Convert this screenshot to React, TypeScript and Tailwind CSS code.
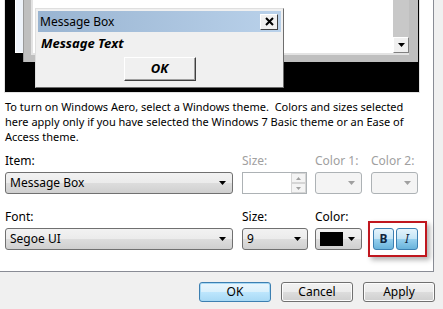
import React from 'react'

function Arrow({ color = '#000' }: { color?: string }) {
  return (
    <svg width="7" height="4" viewBox="0 0 7 4">
      <path d="M0 0h7L3.5 4z" fill={color} />
    </svg>
  )
}

function Combo({ text, width, swatch }: { text?: string; width: string; swatch?: boolean }) {
  return (
    <div
      className={`${width} h-[22px] flex items-center justify-between pl-1 pr-[6px] rounded-[3px] border border-[#707070] bg-[linear-gradient(#f2f2f2_0%,#ebebeb_50%,#dddddd_50%,#cfcfcf_100%)]`}
    >
      {swatch ? <div className="w-[23px] h-[14px] bg-black" /> : <span className="leading-none">{text}</span>}
      <Arrow />
    </div>
  )
}

function DisabledCombo() {
  return (
    <div className="w-[47px] h-[22px] flex items-center justify-end pr-[6px] rounded-[3px] border border-[#adb2b5] bg-[#f4f4f4]">
      <Arrow color="#a0a0a0" />
    </div>
  )
}

function DialogButton({ label, primary }: { label: string; primary?: boolean }) {
  return (
    <div
      className={
        primary
          ? 'w-[72px] h-[20px] flex items-center justify-center rounded-[3px] border border-[#3c7fb1] shadow-[inset_0_0_0_1px_#a7d9f5] bg-[linear-gradient(#eaf6fd_0%,#d9f0fc_50%,#bee6fd_50%,#a7d9f5_100%)]'
          : 'w-[72px] h-[20px] flex items-center justify-center rounded-[3px] border border-[#707070] shadow-[inset_0_0_0_1px_#fcfcfc] bg-[linear-gradient(#f2f2f2_0%,#ebebeb_50%,#dddddd_50%,#cfcfcf_100%)]'
      }
    >
      {label}
    </div>
  )
}

function Preview() {
  return (
    <div className="ml-1 w-[416px] h-[93px] border-x border-b border-[#e3e3e3]">
      <div className="relative w-full h-full bg-black overflow-hidden">
        {/* inactive window */}
        <div className="absolute left-[10px] top-[-20px] w-[390px] h-[73px] bg-[#eef3fa] border border-white" />
        {/* active window */}
        <div className="absolute left-[18px] top-[-10px] w-[395px] h-[72px] bg-[#bfbfbf] border-l border-[#9a9a9a] pl-[7px] pr-[9px] pb-[7px] flex">
          <div className="flex-1 flex border-l-2 border-b-2 border-[#e3e3e3] bg-white">
            <div className="flex-1" />
            <div className="w-[16px] bg-[#c8c8c8] flex flex-col justify-end">
              <div className="h-[16px] bg-[#f0f0f0] border border-white border-r-[#808080] border-b-[#808080] flex items-center justify-center">
                <Arrow />
              </div>
            </div>
          </div>
        </div>
        {/* message box */}
        <div className="absolute left-[30px] top-[8px] w-[249px] h-[80px] bg-[#f0f0f0] border border-[#dfdfdf] border-r-[#6d6d6d] border-b-[#6d6d6d] p-[2px] flex flex-col">
          <div className="h-[21px] flex items-center justify-between pl-[2px] pr-[3px] bg-linear-to-r from-[#99b4d1] to-[#b9d1ea]">
            <span className="text-[12px] leading-none">Message Box</span>
            <div className="w-[18px] h-[16px] bg-[#f0f0f0] border border-white border-r-[#404040] border-b-[#404040] flex items-center justify-center">
              <svg width="9" height="9" viewBox="0 0 9 9">
                <path d="M1 1L8 8M8 1L1 8" stroke="#000" strokeWidth="2" />
              </svg>
            </div>
          </div>
          <div className="pl-[3px] pt-[2px] h-[22px] flex items-center text-[13px] font-bold italic">Message Text</div>
          <div className="flex justify-center mt-[3px]">
            <div className="w-[72px] h-[24px] bg-[#f0f0f0] border border-white border-r-[#404040] border-b-[#404040] shadow-[inset_-1px_-1px_0_#a0a0a0] flex items-center justify-center text-[13px] font-bold italic">
              OK
            </div>
          </div>
        </div>
      </div>
    </div>
  )
}

export default function App() {
  return (
    <div className="w-[443px] h-[309px] overflow-hidden bg-[#f0f0f0] text-[12px] text-black font-['Noto_Sans',sans-serif]">
      <div className="w-[434px] h-[272px] bg-white border-r border-b border-[#898c95]">
        <Preview />

        <p className="mt-[6px] ml-[5px] text-[11px] leading-[15px] whitespace-nowrap">
          To turn on Windows Aero, select a Windows theme.&nbsp; Colors and sizes selected
          <br />
          here apply only if you have selected the Windows 7 Basic theme or an Ease of
          <br />
          Access theme.
        </p>

        <div className="mt-[9px] ml-[5px] flex">
          <div className="w-[228px] mr-[9px]">
            <div className="leading-[16px] mb-[3px]">Item:</div>
            <Combo text="Message Box" width="w-[228px]" />
          </div>
          <div className="w-[65px] mr-[8px] text-[#a0a0a0]">
            <div className="leading-[16px] mb-[3px]">Size:</div>
            <div className="h-[22px] flex border border-[#adb2b5] bg-white">
              <div className="flex-1" />
              <div className="w-[15px] flex flex-col">
                <div className="flex-1 bg-[#f4f4f4] border border-[#d5d5d5] flex items-center justify-center">
                  <svg width="5" height="3" viewBox="0 0 5 3"><path d="M0 3h5L2.5 0z" fill="#a0a0a0" /></svg>
                </div>
                <div className="flex-1 bg-[#f4f4f4] border border-[#d5d5d5] flex items-center justify-center">
                  <svg width="5" height="3" viewBox="0 0 5 3"><path d="M0 0h5L2.5 3z" fill="#a0a0a0" /></svg>
                </div>
              </div>
            </div>
          </div>
          <div className="w-[47px] mr-[9px] text-[#a0a0a0]">
            <div className="leading-[16px] mb-[3px]">Color 1:</div>
            <DisabledCombo />
          </div>
          <div className="w-[47px] text-[#a0a0a0]">
            <div className="leading-[16px] mb-[3px]">Color 2:</div>
            <DisabledCombo />
          </div>
        </div>

        <div className="mt-[15px] ml-[5px] flex">
          <div className="w-[228px] mr-[9px]">
            <div className="leading-[16px] mb-[3px]">Font:</div>
            <Combo text="Segoe UI" width="w-[228px]" />
          </div>
          <div className="w-[66px] mr-[7px]">
            <div className="leading-[16px] mb-[3px]">Size:</div>
            <Combo text="9" width="w-[66px]" />
          </div>
          <div className="w-[47px] mr-[11px]">
            <div className="leading-[16px] mb-[3px]">Color:</div>
            <Combo swatch width="w-[47px]" />
          </div>
          <div className="pt-[19px]">
            <div className="relative flex gap-[2px]">
              <div className="w-[21px] h-[22px] rounded-[3px] border border-[#3c7fb1] bg-[linear-gradient(#e5f4fc_0%,#c4e5f6_50%,#98d1ef_50%,#68b3db_100%)] flex items-center justify-center font-bold text-[#10253f]">
                B
              </div>
              <div className="w-[22px] h-[22px] rounded-[3px] border border-[#3c7fb1] bg-[linear-gradient(#e5f4fc_0%,#c4e5f6_50%,#98d1ef_50%,#68b3db_100%)] flex items-center justify-center italic text-[#10253f]">
                I
              </div>
              <div className="absolute left-[-5px] top-[-7px] w-[59px] h-[36px] border-2 border-[#c0171f] shadow-[3px_3px_5px_rgba(0,0,0,0.3)]" />
            </div>
          </div>
        </div>
      </div>

      <div className="flex justify-end gap-[10px] pr-[8px] pt-[10px]">
        <DialogButton label="OK" primary />
        <DialogButton label="Cancel" />
        <DialogButton label="Apply" />
      </div>
    </div>
  )
}
